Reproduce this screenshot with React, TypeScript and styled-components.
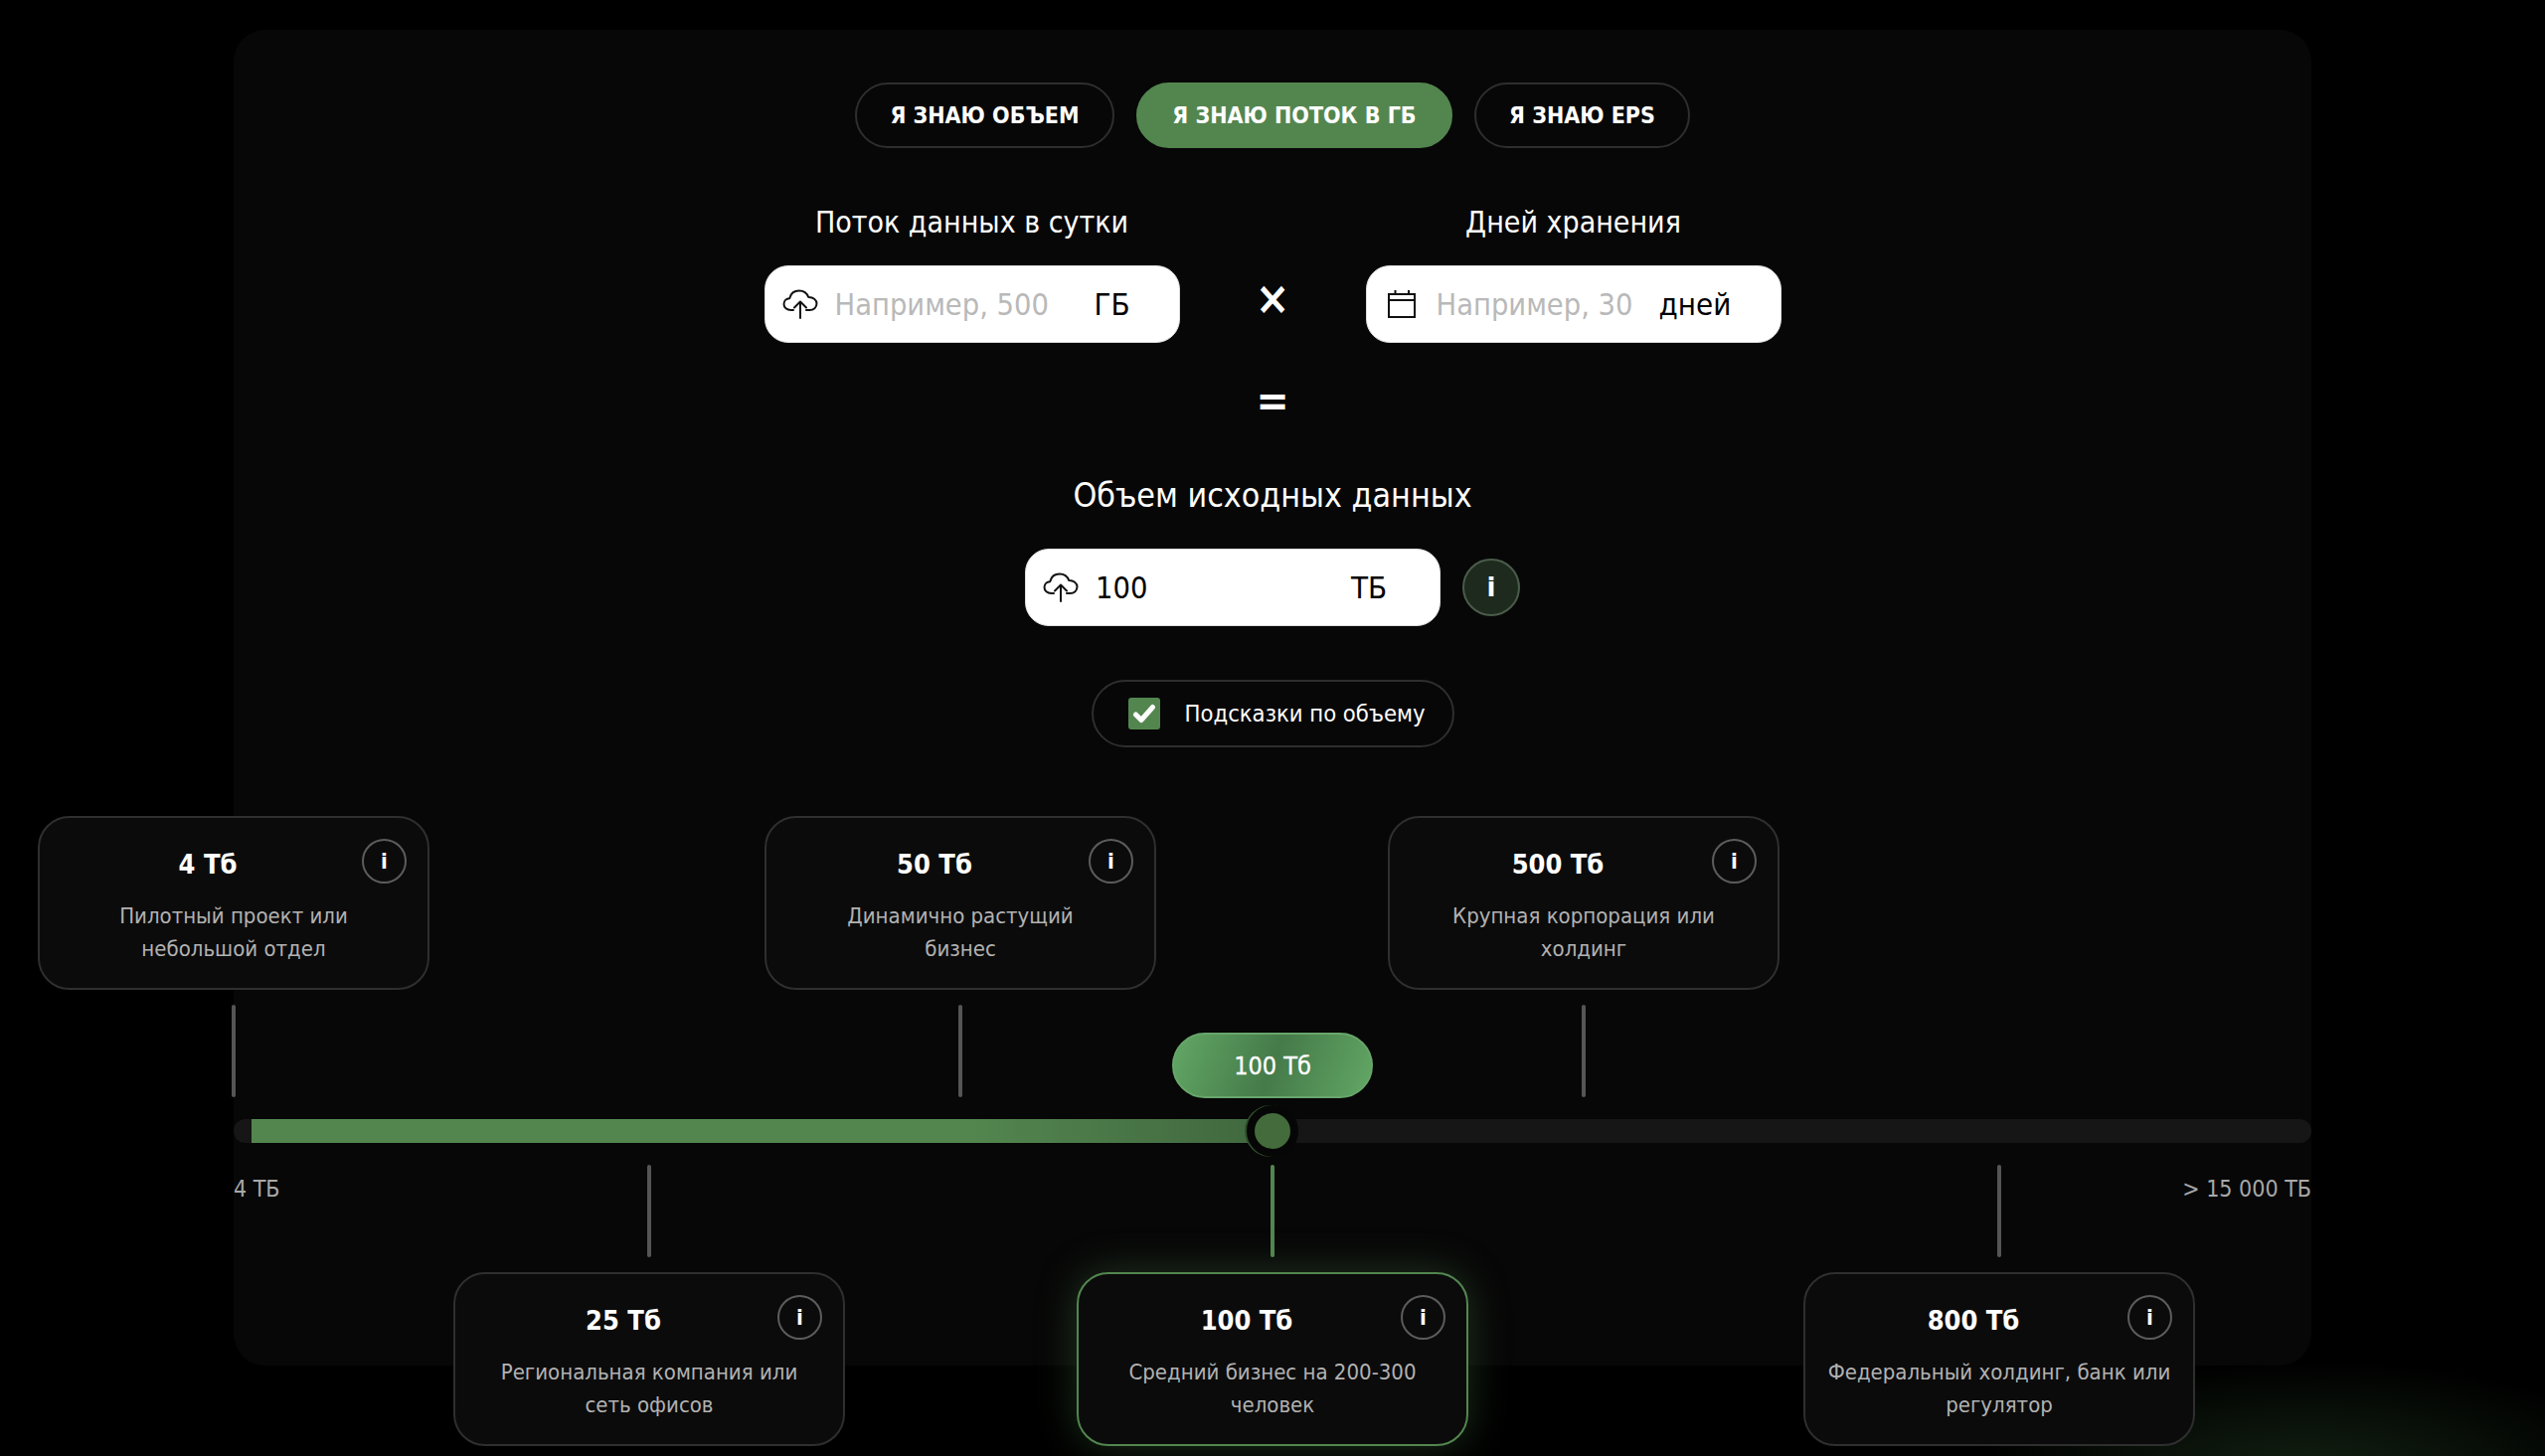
import React from "react";
import styled, { createGlobalStyle } from "styled-components";

const GlobalStyle = createGlobalStyle`
  * {
    box-sizing: border-box;
  }
  html, body {
    margin: 0;
    padding: 0;
    background: #000;
  }
  body {
    font-family: "DejaVu Sans", "Noto Sans", sans-serif;
    font-stretch: condensed;
    color: #fff;
  }
`;

const Page = styled.div`
  width: 2560px;
  height: 1465px;
  padding-top: 30px;
  overflow: hidden;
  background: radial-gradient(ellipse 340px 110px at 2320px 1480px, #122012 0%, rgba(18, 32, 18, 0) 100%), #000;
`;

const Panel = styled.main`
  width: 2090px;
  height: 1344px;
  margin: 0 auto;
  padding-top: 53px;
  display: flex;
  flex-direction: column;
  align-items: center;
  background: #070707;
  border-radius: 32px;

  & > * {
    flex: none;
  }
`;

const Tabs = styled.div`
  display: flex;
  gap: 22px;
`;

const Tab = styled.button<{ $active?: boolean; $width: number }>`
  width: ${(p) => p.$width}px;
  height: 66px;
  padding: 0;
  border: 2px solid ${(p) => (p.$active ? "#53864f" : "#2e2e2e")};
  border-radius: 33px;
  background: ${(p) => (p.$active ? "#53864f" : "transparent")};
  color: #fff;
  font-family: inherit;
  font-stretch: condensed;
  font-size: 23px;
  font-weight: 700;
`;

const Fields = styled.div`
  margin-top: 53px;
  display: flex;
  align-items: flex-start;
  gap: 187px;
  position: relative;
`;

const Field = styled.div`
  width: 418px;
  display: flex;
  flex-direction: column;
  align-items: center;
  gap: 21px;
`;

const Label = styled.div`
  font-size: 30px;
  line-height: 44px;
`;

const InputBox = styled.div`
  width: 418px;
  height: 78px;
  padding-left: 16px;
  display: flex;
  align-items: center;
  background: #fff;
  border: 1px solid #ddd;
  border-radius: 24px;
  color: #000;
`;

const IconSlot = styled.div`
  width: 38px;
  flex: none;
  display: flex;
  justify-content: center;
`;

const Value = styled.input<{ $width: number }>`
  width: ${(p) => p.$width}px;
  margin-left: 16px;
  padding: 0;
  border: none;
  outline: none;
  background: transparent;
  color: #000;
  font-family: inherit;
  font-stretch: condensed;
  font-size: 30.5px;

  &::placeholder {
    color: #b9b9b9;
    opacity: 1;
  }
`;

const Unit = styled.span`
  font-size: 31px;
`;

const Operator = styled.div`
  position: absolute;
  left: 50%;
  top: 59px;
  transform: translateX(-50%);
  font-size: 46px;
  line-height: 78px;
  font-weight: 700;
`;

const EqualSign = styled.div`
  margin-top: 28px;
  height: 60px;
  font-size: 44px;
  line-height: 60px;
  font-weight: 700;
`;

const ResultTitle = styled(Label)`
  margin-top: 44px;
  font-size: 33.7px;
`;

const ResultRow = styled.div`
  margin-top: 31px;
  display: flex;
  align-items: center;
  gap: 22px;
`;

const RoundInfo = styled.button`
  width: 58px;
  height: 58px;
  border: 2px solid #4a5c4a;
  border-radius: 50%;
  background: #1d2a1d;
  color: #fff;
  font-family: inherit;
  font-size: 26px;
  font-weight: 700;
`;

const HintToggle = styled.label`
  margin-top: 54px;
  width: 365px;
  height: 68px;
  padding-left: 35px;
  display: flex;
  align-items: center;
  gap: 25px;
  border: 2px solid #2e2e2e;
  border-radius: 34px;
  font-size: 23.6px;
`;

const CheckBox = styled.span`
  width: 32px;
  height: 32px;
  display: flex;
  align-items: center;
  justify-content: center;
  flex: none;
  background: #53864f;
  border-radius: 3px;
`;

const Scale = styled.section`
  margin-top: 69px;
  width: 2090px;
  height: 633px;
  position: relative;
`;

const Marker = styled.div<{ $x: number; $bottom?: boolean }>`
  position: absolute;
  left: ${(p) => p.$x - 197}px;
  top: ${(p) => (p.$bottom ? 351 : 0)}px;
  width: 394px;
  display: flex;
  flex-direction: ${(p) => (p.$bottom ? "column-reverse" : "column")};
  align-items: center;
  gap: 15px;
`;

const Connector = styled.div<{ $active?: boolean }>`
  width: 4px;
  height: 93px;
  border-radius: 2px;
  background: ${(p) => (p.$active ? "#53864f" : "#555")};
`;

const Card = styled.article<{ $active?: boolean }>`
  width: 394px;
  height: 175px;
  padding: 28px 10px 0;
  position: relative;
  background: #0b0b0b;
  border: 2px solid ${(p) => (p.$active ? "#53864f" : "#2f2f2f")};
  border-radius: 32px;
  text-align: center;
  box-shadow: ${(p) => (p.$active ? "0 0 40px rgba(83, 134, 79, 0.35)" : "none")};
`;

const CardTitle = styled.div`
  padding-right: 52px;
  font-size: 27px;
  line-height: 38px;
  font-weight: 700;
`;

const CardText = styled.div`
  margin-top: 16px;
  color: #b2b2b2;
  font-size: 22px;
  line-height: 33px;
  white-space: nowrap;
`;

const CardInfo = styled.span`
  position: absolute;
  right: 21px;
  top: 21px;
  width: 45px;
  height: 45px;
  display: flex;
  align-items: center;
  justify-content: center;
  border: 2px solid #5c5c5c;
  border-radius: 50%;
  font-size: 22px;
  font-weight: 700;
`;

const Track = styled.div`
  position: absolute;
  left: 0;
  right: 0;
  top: 305px;
  height: 24px;
  padding-left: 18px;
  background: #161616;
  border-radius: 12px;
`;

const TrackFill = styled.div`
  height: 100%;
  background: linear-gradient(90deg, #53864f 0%, #53864f 70%, #426a40 97%);
`;

const Thumb = styled.div<{ $x: number }>`
  position: absolute;
  left: ${(p) => p.$x - 26}px;
  top: 291px;
  width: 52px;
  height: 52px;
  border: 8px solid #060606;
  border-radius: 50%;
  background: #436b3c;
  box-shadow: -2px 0 0 0 #2f4d2c;
`;

const Bubble = styled.div<{ $x: number }>`
  position: absolute;
  left: ${(p) => p.$x - 101}px;
  top: 218px;
  width: 202px;
  height: 66px;
  display: flex;
  align-items: center;
  justify-content: center;
  border-radius: 33px;
  border: 2px solid #68a66b;
  background: linear-gradient(110deg, #62a765 0%, #457a49 50%, #62a765 100%);
  font-size: 25px;
  -webkit-text-stroke: 0.3px #fff;
`;

const ScaleLabels = styled.div`
  position: absolute;
  left: 0;
  right: 0;
  top: 360px;
  display: flex;
  justify-content: space-between;
  color: #a8a8a8;
  font-size: 23px;
  line-height: 30px;
`;

function CloudIcon() {
  return (
    <svg width="36" height="30" viewBox="0 0 36 30" fill="none" stroke="#111" strokeWidth="2" strokeLinecap="round" strokeLinejoin="round">
      <path d="M11 21H8.5C4.5 21 1.5 18.4 1.5 15C1.5 11.8 4 9.4 7.2 9.2C8.4 4.4 12.2 1.5 16.8 1.5C21.2 1.5 24.8 4.2 26.2 8C30.8 7.8 34.5 10.8 34.5 14.6C34.5 18.4 31.4 21 27.5 21H24" />
      <path d="M18 29V13" />
      <path d="M12 18.5L18 12.5L24 18.5" />
    </svg>
  );
}

function CalendarIcon() {
  return (
    <svg width="30" height="30" viewBox="0 0 30 30" fill="none" stroke="#111" strokeWidth="2">
      <path d="M2 5H28V28H2Z" />
      <path d="M2 11H28" />
      <path d="M8.5 1V5M22 1V5" />
    </svg>
  );
}

const markers = [
  { x: 0, title: "4 Тб", text: ["Пилотный проект или", "небольшой отдел"] },
  { x: 731, title: "50 Тб", text: ["Динамично растущий", "бизнес"] },
  { x: 1358, title: "500 Тб", text: ["Крупная корпорация или", "холдинг"] },
  { x: 418, title: "25 Тб", text: ["Региональная компания или", "сеть офисов"], bottom: true },
  { x: 1045, title: "100 Тб", text: ["Средний бизнес на 200-300", "человек"], bottom: true, active: true },
  { x: 1776, title: "800 Тб", text: ["Федеральный холдинг, банк или", "регулятор"], bottom: true },
];

export default function App() {
  return (
    <>
      <GlobalStyle />
      <Page>
        <Panel>
          <Tabs>
            <Tab $width={261}>Я ЗНАЮ ОБЪЕМ</Tab>
            <Tab $active $width={318}>Я ЗНАЮ ПОТОК В ГБ</Tab>
            <Tab $width={217}>Я ЗНАЮ EPS</Tab>
          </Tabs>

          <Fields>
            <Field>
              <Label>Поток данных в сутки</Label>
              <InputBox>
                <IconSlot>
                  <CloudIcon />
                </IconSlot>
                <Value $width={261} placeholder="Например, 500" />
                <Unit>ГБ</Unit>
              </InputBox>
            </Field>
            <Operator>×</Operator>
            <Field>
              <Label>Дней хранения</Label>
              <InputBox>
                <IconSlot>
                  <CalendarIcon />
                </IconSlot>
                <Value $width={224} placeholder="Например, 30" />
                <Unit>дней</Unit>
              </InputBox>
            </Field>
          </Fields>

          <EqualSign>=</EqualSign>
          <ResultTitle>Объем исходных данных</ResultTitle>
          <ResultRow>
            <InputBox>
              <IconSlot>
                <CloudIcon />
              </IconSlot>
              <Value $width={257} defaultValue="100" />
              <Unit>ТБ</Unit>
            </InputBox>
            <RoundInfo>i</RoundInfo>
          </ResultRow>

          <HintToggle>
            <CheckBox>
              <svg width="24" height="20" viewBox="0 0 24 20" fill="none" stroke="#fff" strokeWidth="5" strokeLinecap="round" strokeLinejoin="round">
                <path d="M3.5 11L9 16.5L20.5 3.5" />
              </svg>
            </CheckBox>
            Подсказки по объему
          </HintToggle>

          <Scale>
            {markers.map((m) => (
              <Marker key={m.title} $x={m.x} $bottom={m.bottom}>
                <Card $active={m.active}>
                  <CardTitle>{m.title}</CardTitle>
                  <CardText>
                    {m.text[0]}
                    <br />
                    {m.text[1]}
                  </CardText>
                  <CardInfo>i</CardInfo>
                </Card>
                <Connector $active={m.active} />
              </Marker>
            ))}
            <Bubble $x={1045}>100 Тб</Bubble>
            <Track>
              <TrackFill style={{ width: (1045 - 18) + "px" }} />
            </Track>
            <Thumb $x={1045} />
            <ScaleLabels>
              <span>4 ТБ</span>
              <span>&gt; 15 000 ТБ</span>
            </ScaleLabels>
          </Scale>
        </Panel>
      </Page>
    </>
  );
}
